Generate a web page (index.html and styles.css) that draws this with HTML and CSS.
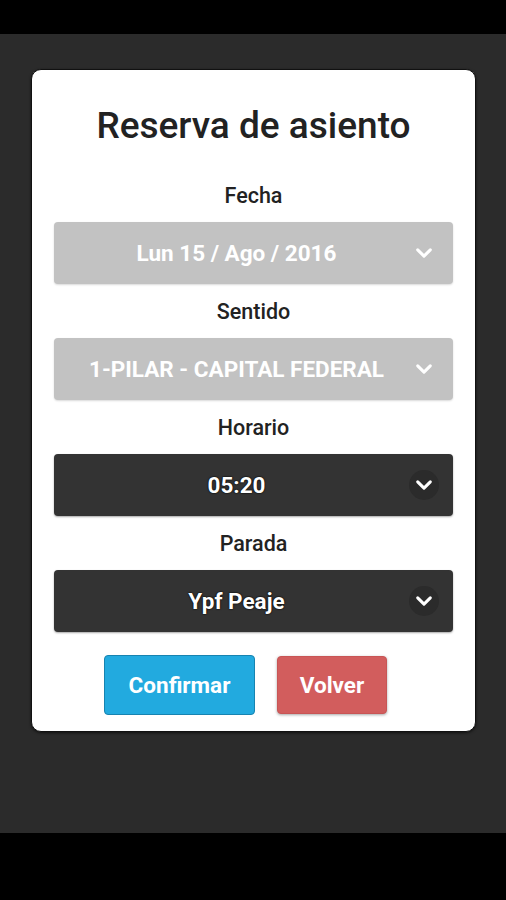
FILE: index.html
```html
<!DOCTYPE html>
<html lang="es">
<head>
  <meta charset="UTF-8">
  <meta name="viewport" content="width=device-width, initial-scale=1.0">
  <title>Reserva de asiento</title>
  <link rel="stylesheet" href="styles.css">
</head>
<body>
  <div class="statusbar"></div>
  <main class="screen">
    <div class="card">
      <h1>Reserva de asiento</h1>

      <div class="field">
        <label>Fecha</label>
        <div class="picker disabled">
          <span>Lun 15 / Ago / 2016</span>
          <svg class="chev" viewBox="0 0 20 12"><path d="M3 2.5l7 7 7-7"/></svg>
        </div>
      </div>

      <div class="field">
        <label>Sentido</label>
        <div class="picker disabled">
          <span>1-PILAR - CAPITAL FEDERAL</span>
          <svg class="chev" viewBox="0 0 20 12"><path d="M3 2.5l7 7 7-7"/></svg>
        </div>
      </div>

      <div class="field">
        <label>Horario</label>
        <div class="picker">
          <span>05:20</span>
          <i class="chev-bg"><svg class="chev" viewBox="0 0 20 12"><path d="M3 2.5l7 7 7-7"/></svg></i>
        </div>
      </div>

      <div class="field">
        <label>Parada</label>
        <div class="picker">
          <span>Ypf Peaje</span>
          <i class="chev-bg"><svg class="chev" viewBox="0 0 20 12"><path d="M3 2.5l7 7 7-7"/></svg></i>
        </div>
      </div>

      <div class="actions">
        <button class="btn confirm">Confirmar</button>
        <button class="btn back">Volver</button>
      </div>
    </div>
  </main>
  <div class="navbar"></div>
</body>
</html>
```
FILE: styles.css
```css
body {
  margin: 0;
  font-family: 'Roboto', 'Liberation Sans', sans-serif;
  background-color: #2b2b2b;
  height: 900px;
  display: flex;
  flex-direction: column;
}

.statusbar {
  height: 34px;
  background-color: #000;
}

.navbar {
  height: 67px;
  background-color: #000;
}

.screen {
  flex: 1;
  padding-top: 35px;
}

.card {
  margin-left: 31px;
  width: 445px;
  box-sizing: border-box;
  background-color: #fff;
  border: 1px solid #111;
  border-radius: 10px;
  box-shadow: 0 1px 3px rgba(0, 0, 0, 0.6);
  padding: 0 22px 16px;
}

h1 {
  margin: 0;
  padding-top: 24px;
  height: 98px;
  box-sizing: border-box;
  line-height: 64px;
  text-align: center;
  font-size: 37px;
  font-weight: 500;
  color: #222;
}

.field label {
  display: block;
  height: 54px;
  line-height: 56px;
  text-align: center;
  font-size: 21.5px;
  font-weight: 500;
  color: #222;
}

.picker {
  height: 62px;
  border-radius: 4px;
  background-color: #333;
  box-shadow: 0 1px 2px rgba(0, 0, 0, 0.35);
  display: flex;
  align-items: center;
  justify-content: center;
  position: relative;
  color: #fff;
  font-size: 22.5px;
  font-weight: 700;
}

.picker span {
  margin-right: 34px;
  text-shadow: 0 0 2px #000, 0 0 1px #000;
}

.picker.disabled {
  background-color: #c2c2c2;
  box-shadow: 0 1px 2px rgba(0, 0, 0, 0.15);
}

.picker.disabled span {
  text-shadow: none;
}

.chev {
  width: 18px;
  height: 12px;
  fill: none;
  stroke: #fff;
  stroke-width: 3.4;
  stroke-linecap: round;
  stroke-linejoin: round;
}

.picker > .chev {
  position: absolute;
  right: 20px;
  top: 25px;
}

.chev-bg {
  position: absolute;
  right: 14px;
  top: 16px;
  width: 30px;
  height: 30px;
  border-radius: 50%;
  background-color: #2b2b2b;
  display: flex;
  align-items: center;
  justify-content: center;
}

.actions {
  display: flex;
  justify-content: center;
  gap: 22px;
  margin-top: 23px;
  padding-right: 16px;
}

.btn {
  height: 60px;
  border-radius: 4px;
  font-family: inherit;
  font-size: 22.5px;
  font-weight: 700;
  color: #fff;
}

.confirm {
  width: 151px;
  background-color: #22aadf;
  border: 1px solid #1783b0;
}

.back {
  width: 110px;
  height: 58px;
  margin-top: 1px;
  background-color: #d25d5d;
  border: 1px solid #c85555;
  box-shadow: 0 1px 3px rgba(0, 0, 0, 0.35);
}
```
